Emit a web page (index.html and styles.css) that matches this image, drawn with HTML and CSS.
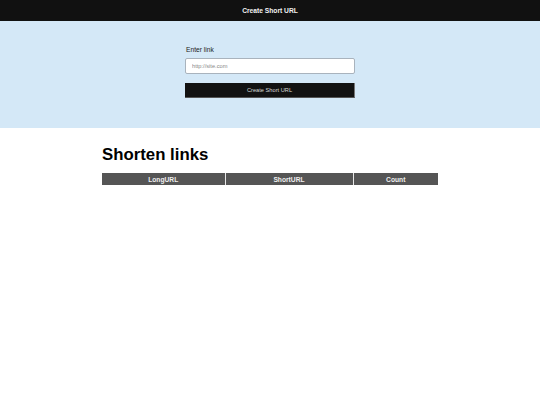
FILE: index.html
```html
<!DOCTYPE html>
<html>
<head>
<meta charset="utf-8">
<link rel="stylesheet" href="styles.css">
</head>
<body>
<header class="topbar">Create Short URL</header>
<section class="hero">
  <form class="form">
    <label class="label" for="link">Enter link</label>
    <input class="input" id="link" type="text" placeholder="http://site.com">
    <button class="btn" type="button">Create Short URL</button>
  </form>
</section>
<main class="content">
  <h1 class="title">Shorten links</h1>
  <table class="table">
    <thead>
      <tr>
        <th class="col-long">LongURL</th>
        <th class="col-short">ShortURL</th>
        <th class="col-count">Count</th>
      </tr>
    </thead>
  </table>
</main>
</body>
</html>
```
FILE: styles.css
```css
* { box-sizing: border-box; }
html, body { margin: 0; padding: 0; background: #fff; }
body { font-family: "Liberation Sans", Arial, sans-serif; color: #111; }

.topbar {
  height: 21px;
  background: #111;
  color: #f2f2f2;
  font-weight: bold;
  font-size: 6.7px;
  display: flex;
  align-items: center;
  justify-content: center;
}

.hero {
  background: #d4e8f7;
  height: 107px;
  display: flex;
  justify-content: center;
  padding-top: 25px;
}

.form {
  width: 170px;
  display: flex;
  flex-direction: column;
}

.label {
  font-size: 6.7px;
  color: #222;
  line-height: 8px;
  margin-bottom: 4px;
  padding-left: 1px;
}

.input {
  height: 16px;
  border: 1px solid #a9b3bd;
  border-radius: 2px;
  background: #fff;
  font-family: "Liberation Sans", Arial, sans-serif;
  font-size: 5.7px;
  padding: 0 6px;
  margin: 0 0 9px 0;
  outline: none;
}
.input::placeholder { color: #888; }

.btn {
  height: 15px;
  background: #121212;
  color: #d8d8d8;
  border: none;
  border-right: 1px solid #777;
  border-bottom: 1px solid #555;
  font-family: "Liberation Sans", Arial, sans-serif;
  font-size: 5.7px;
  padding: 0;
}

.content {
  width: 336px;
  margin: 0 auto;
  padding-top: 17px;
}

.title {
  font-size: 16.8px;
  font-weight: bold;
  margin: 0 0 8px 0;
  line-height: 20px;
  color: #000;
}

.table {
  width: 336px;
  border-collapse: collapse;
  table-layout: fixed;
}
.table th {
  background: #555;
  color: #f0f0f0;
  font-size: 6.7px;
  font-weight: bold;
  height: 12px;
  padding: 0;
  border-left: 1px solid #e8e8e8;
}
.table th:first-child { border-left: none; }
.col-long { width: 123px; }
.col-short { width: 128px; }
.col-count { width: 85px; }
```
